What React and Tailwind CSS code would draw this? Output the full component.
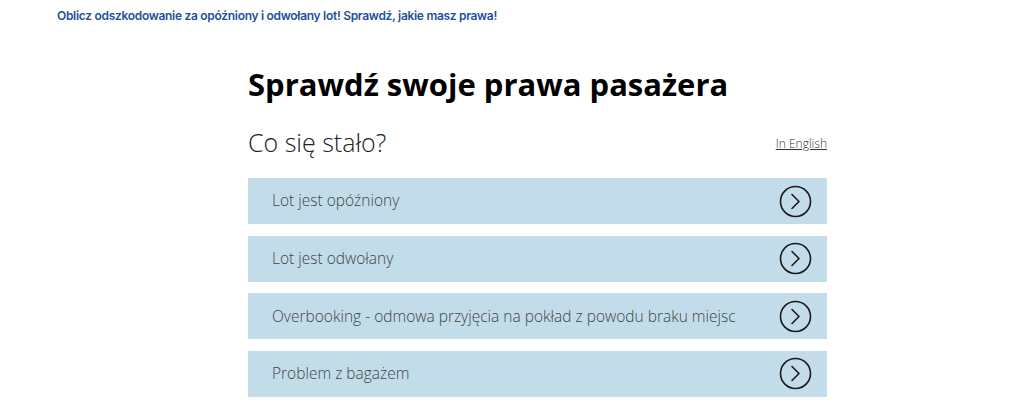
import React from 'react';

const items = [
  "Lot jest opóźniony",
  "Lot jest odwołany",
  "Overbooking - odmowa przyjęcia na pokład z powodu braku miejsc",
  "Problem z bagażem",
];

const ArrowCircle = () => (
  <svg width="33" height="33" viewBox="0 0 33 33" fill="none">
    <circle cx="16.5" cy="16.5" r="15" stroke="#1a1a1a" strokeWidth="1.6" />
    <path d="M13 9.5 L20 16.5 L13 23.5" stroke="#1a1a1a" strokeWidth="1.6" strokeLinecap="round" strokeLinejoin="round" />
  </svg>
);

const App = () => {
  return (
    <div className="min-h-screen bg-white" style={{ fontFamily: '"Open Sans", sans-serif' }}>
      <div className="pl-[57px] pt-[7px] h-[24px]">
        <p className="text-[12px] font-semibold text-[#1f4f9b] tracking-[-0.3px]" style={{ fontFamily: 'Inter, sans-serif' }}>
          Oblicz odszkodowanie za opóźniony i odwołany lot! Sprawdź, jakie masz prawa!
        </p>
      </div>

      <div className="w-[579px] ml-[248px] pt-[38px]">
        <h1 className="text-[31px] font-bold text-black leading-[44px]">Sprawdź swoje prawa pasażera</h1>

        <div className="flex items-end justify-between mt-[19px]">
          <h2 className="text-[25px] font-light text-[#222] leading-[34px]">Co się stało?</h2>
          <a href="#" className="text-[12px] font-light text-[#333] underline mb-[6px]">In English</a>
        </div>

        <div className="flex flex-col gap-[11.6px] mt-[19px]">
          {items.map((item) => (
            <div key={item} className="h-[46px] bg-[#c2dcea] flex items-center justify-between pl-[24px] pr-[15px]">
              <span className="text-[15.5px] font-light text-[#444]">{item}</span>
              <ArrowCircle />
            </div>
          ))}
        </div>
      </div>
    </div>
  );
};

export default App;
